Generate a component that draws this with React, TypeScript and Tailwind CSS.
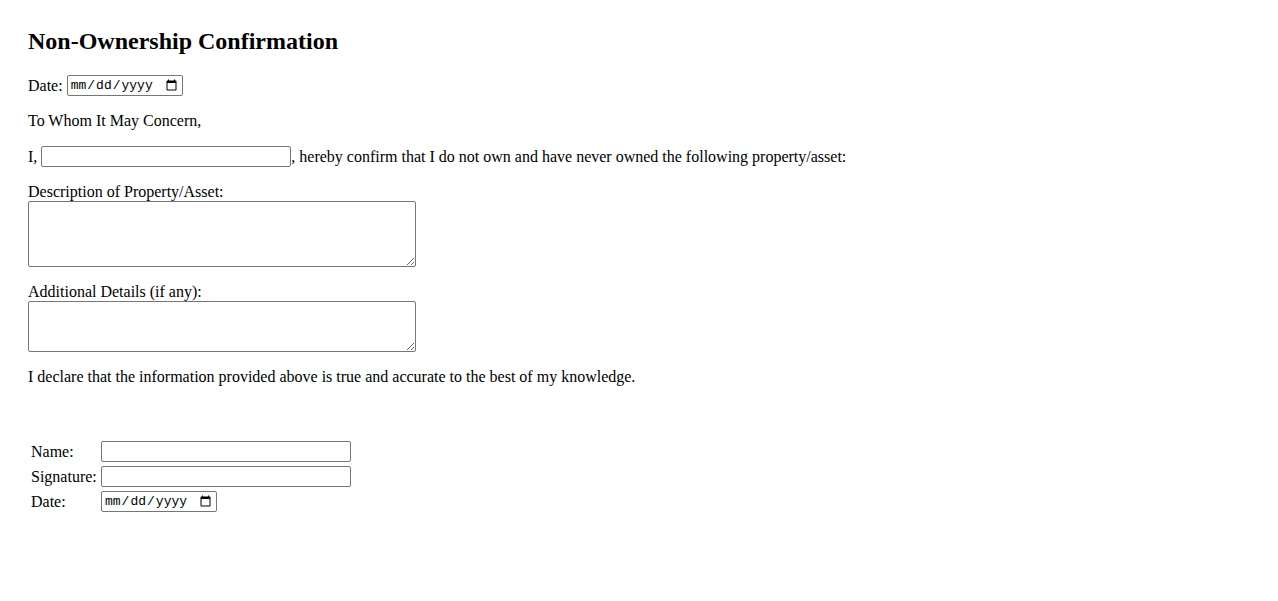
import React from "react";

const inputBox =
  "h-[21px] border border-[#767676] rounded-[2px] bg-white px-[2px] py-[1px] text-[13px] text-black outline-none";

export default function App() {
  return (
    <div
      className="min-h-screen bg-white pl-[28px] pt-[28px] text-[16px] text-black"
      style={{ fontFamily: '"Liberation Serif", "Times New Roman", serif' }}
    >
      <h2 className="text-[24px] font-bold leading-[27px] mb-[20px]">
        Non-Ownership Confirmation
      </h2>

      <p className="flex items-center h-[21px] mb-[16px] leading-[18px]">
        Date:
        <input
          type="date"
          className={`${inputBox} ml-[4px] w-[116px]`}
          style={{ fontFamily: '"Liberation Mono", "Courier New", monospace' }}
        />
      </p>

      <p className="leading-[18px] mb-[16px]">To Whom It May Concern,</p>

      <p className="flex items-center h-[21px] mb-[16px] leading-[18px]">
        I,
        <input type="text" className={`${inputBox} ml-[4px] w-[250px]`} />
        , hereby confirm that I do not own and have never owned the following
        property/asset:
      </p>

      <div className="mb-[16px]">
        <label className="block leading-[18px]">
          Description of Property/Asset:
        </label>
        <textarea
          className="block w-[388px] h-[66px] border border-[#767676] rounded-[2px] p-[2px] text-[13px] outline-none"
          style={{ fontFamily: '"Liberation Mono", monospace' }}
        />
      </div>

      <div className="mb-[16px]">
        <label className="block leading-[18px]">Additional Details (if any):</label>
        <textarea
          className="block w-[388px] h-[51px] border border-[#767676] rounded-[2px] p-[2px] text-[13px] outline-none"
          style={{ fontFamily: '"Liberation Mono", monospace' }}
        />
      </div>

      <p className="leading-[18px]">
        I declare that the information provided above is true and accurate to
        the best of my knowledge.
      </p>

      <div className="mt-[55px] pl-[3px] grid grid-cols-[70px_auto] gap-y-[4px] items-center w-max">
        <span className="leading-[18px]">Name:</span>
        <input type="text" className={`${inputBox} w-[250px]`} />
        <span className="leading-[18px]">Signature:</span>
        <input type="text" className={`${inputBox} w-[250px]`} />
        <span className="leading-[18px]">Date:</span>
        <input
          type="date"
          className={`${inputBox} w-[116px]`}
          style={{ fontFamily: '"Liberation Mono", "Courier New", monospace' }}
        />
      </div>
    </div>
  );
}
